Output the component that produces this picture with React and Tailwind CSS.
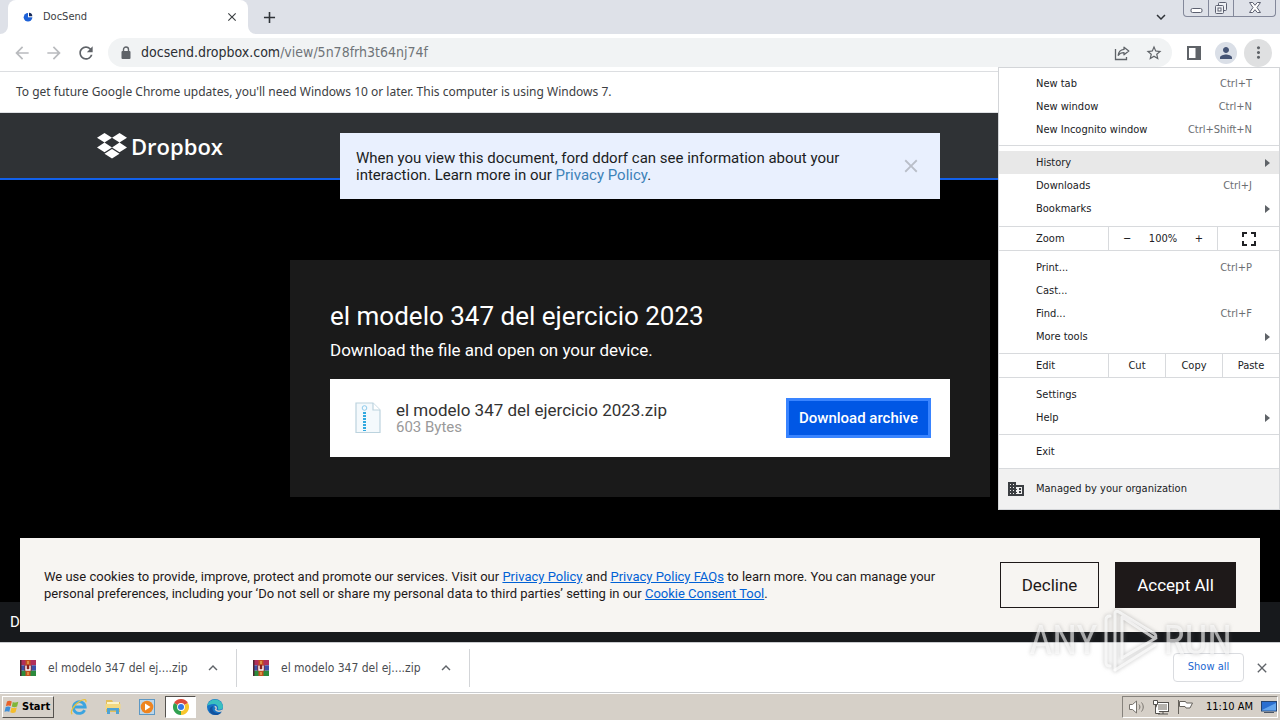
import React from "react";
import {
  MdArrowBack,
  MdArrowForward,
  MdRefresh,
  MdStarBorder,
  MdClose,
  MdAdd,
  MdMoreVert,
  MdPerson,
  MdFullscreen,
  MdKeyboardArrowDown,
  MdKeyboardArrowUp,
} from "react-icons/md";

const ui = "font-['DejaVu_Sans_Condensed','Noto_Sans',sans-serif]";
const web = "font-['Roboto','Liberation_Sans',sans-serif]";

function TabStrip() {
  return (
    <div className="flex h-[34px] items-end bg-[#dee1e8] pl-2">
      <div className="relative flex h-[34px] w-[240px] items-center rounded-t-lg bg-white pl-[14px] pr-[9px]">
        <svg className="absolute -left-2 bottom-0" width="8" height="8" viewBox="0 0 8 8">
          <path d="M8 0v8H0a8 8 0 0 0 8-8z" fill="#fff" />
        </svg>
        <svg className="absolute -right-2 bottom-0" width="8" height="8" viewBox="0 0 8 8">
          <path d="M0 0v8h8a8 8 0 0 1-8-8z" fill="#fff" />
        </svg>
        <svg width="12" height="12" viewBox="0 0 12 12">
          <circle cx="6" cy="6.300" r="4.300" fill="#1d61d8" />
          <path d="M6 6.300V1.500h5v4.800z" fill="#fff" />
          <path d="M7 5.300V1.800a3.500 3.500 0 0 1 3.300 3.500z" fill="#172a5a" />
        </svg>
        <span className="ml-[9px] flex-1 text-[11px] text-[#3c4043]">DocSend</span>
        <button aria-label="Close tab" className="text-[#3c4043]">
          <MdClose size={14} stroke="currentColor" />
        </button>
      </div>
      <button aria-label="New tab" className="ml-3 flex h-[34px] items-center text-[#2f3338]">
        <MdAdd size={19} stroke="currentColor" />
      </button>
      <div className="flex-1" />
      <button aria-label="Search tabs" className="mr-[13px] flex h-[34px] items-center text-[#2f3338]">
        <MdKeyboardArrowDown size={18} stroke="currentColor" />
      </button>
      <div className="mr-1 flex h-[17px] self-start rounded-b border border-t-0 border-[#83889a] text-[#5c6070]">
        <button aria-label="Minimize" className="flex w-[25px] items-center justify-center border-r border-[#83889a]">
          <svg width="13" height="16" viewBox="0 0 13 16" fill="#fff" stroke="currentColor">
            <rect x="1" y="8.500" width="11" height="4" rx="1.500" />
          </svg>
        </button>
        <button aria-label="Restore" className="flex w-[25px] items-center justify-center border-r border-[#83889a]">
          <svg width="14" height="16" viewBox="0 0 14 16" fill="#eef0f4" stroke="currentColor">
            <rect x="4.500" y="2.500" width="8" height="8" rx="1" />
            <rect x="1.500" y="5.500" width="8" height="8" rx="1" />
            <rect x="4" y="8" width="3" height="3" fill="#fff" />
          </svg>
        </button>
        <button aria-label="Close window" className="flex w-[41px] items-center justify-center">
          <svg width="14" height="16" viewBox="0 0 14 16" fill="#fff" stroke="currentColor">
            <path d="M1.500 2.500h3.200L7 5.300l2.300-2.800h3.200L9 7.500l3.500 5H9.300L7 9.700l-2.300 2.800H1.500L5 7.500z" />
          </svg>
        </button>
      </div>
    </div>
  );
}

function Toolbar() {
  return (
    <div className="flex h-[38px] items-center border-b border-[#dcdee1] bg-white pl-3 pr-2 text-[#5f6368]">
      <button aria-label="Back" className="text-[#b9bbbe]">
        <MdArrowBack size={20} />
      </button>
      <button aria-label="Forward" className="ml-3 text-[#b9bbbe]">
        <MdArrowForward size={20} />
      </button>
      <button aria-label="Reload" className="ml-3">
        <MdRefresh size={20} stroke="currentColor" />
      </button>
      <div className="ml-3 flex h-[29px] flex-1 items-center rounded-full bg-[#f1f3f4] pl-[13px] pr-[9px]">
        <svg width="10" height="14" viewBox="0 0 10 14">
          <rect x=".5" y="5" width="9" height="8" rx="1" fill="currentColor" />
          <path d="M2.500 6V3.500a2.500 2.500 0 0 1 5 0V6" fill="none" stroke="currentColor" strokeWidth="1.400" />
        </svg>
        <div className="ml-[10px] flex-1 text-[14px] text-[#6f7378]">
          <span className="text-[#2b2e33]">docsend.dropbox.com</span>/view/5n78frh3t64nj74f
        </div>
        <button aria-label="Share this page">
          <svg width="16" height="16" viewBox="0 0 16 16" fill="none" stroke="currentColor" strokeWidth="1.300">
            <path d="M1.500 4v10.500h11V12" />
            <path d="M10 2.200 14.800 6 10 9.800V7.600c-2.800 0-4.600.9-5.800 2.700.3-3.200 2.300-5.500 5.800-5.900z" strokeLinejoin="round" />
          </svg>
        </button>
        <button aria-label="Bookmark this tab" className="ml-[15px]">
          <MdStarBorder size={18} />
        </button>
      </div>
      <button aria-label="Side panel" className="ml-[14px]">
        <svg width="16" height="16" viewBox="0 0 16 16" fill="currentColor">
          <path d="M1 1h14v14H1zM3 3v10h6.500V3z" fillRule="evenodd" />
        </svg>
      </button>
      <button aria-label="Profile" className="ml-[13px] flex size-[22px] items-center justify-center rounded-full bg-[#dadfe7] text-[#455475]">
        <MdPerson size={18} />
      </button>
      <button aria-label="Chrome menu" className="ml-[7px] flex size-7 items-center justify-center rounded-full bg-[#dfe0e1]">
        <MdMoreVert size={19} />
      </button>
    </div>
  );
}

function Row({ label, keys, sub, active }) {
  return (
    <button
      className={
        "flex h-[23px] w-full items-center pl-[37px] text-left " +
        (active ? "bg-[#e8e8e8] " : "") +
        (sub ? "pr-[9px]" : "pr-[27px]")
      }
    >
      <span className="flex-1">{label}</span>
      {keys && <span className="text-[#6b6e72]">{keys}</span>}
      {sub && (
        <svg width="5" height="8" viewBox="0 0 5 8">
          <path d="M0 0v8l5-4z" fill="#5f6368" />
        </svg>
      )}
    </button>
  );
}

function ChromeMenu() {
  return (
    <div className="absolute right-0 top-[67px] z-30 w-[282px] border border-[#d3d5d8] bg-white text-[11px] leading-4 text-[#202124]">
      <div className="py-1">
        <Row label="New tab" keys="Ctrl+T" />
        <Row label="New window" keys="Ctrl+N" />
        <Row label="New Incognito window" keys="Ctrl+Shift+N" />
      </div>
      <div className="border-t border-[#d8dadd] pb-1.5 pt-[5px]">
        <Row label="History" sub active />
        <Row label="Downloads" keys="Ctrl+J" />
        <Row label="Bookmarks" sub />
      </div>
      <div className="flex h-6 items-stretch border-t border-[#d8dadd]">
        <span className="flex flex-1 items-center pl-[37px]">Zoom</span>
        <div className="flex w-[109px] items-center justify-between border-l border-[#d8dadd] px-[14px]">
          <button aria-label="Zoom out">−</button>
          <span>100%</span>
          <button aria-label="Zoom in">+</button>
        </div>
        <button aria-label="Full screen" className="flex w-[62px] items-center justify-center border-l border-[#d8dadd]">
          <MdFullscreen size={24} />
        </button>
      </div>
      <div className="border-t border-[#d8dadd] py-[5px]">
        <Row label="Print..." keys="Ctrl+P" />
        <Row label="Cast..." />
        <Row label="Find..." keys="Ctrl+F" />
        <Row label="More tools" sub />
      </div>
      <div className="flex h-6 items-stretch border-t border-[#d8dadd]">
        <span className="flex flex-1 items-center pl-[37px]">Edit</span>
        <button className="w-[57px] border-l border-[#d8dadd]">Cut</button>
        <button className="w-[57px] border-l border-[#d8dadd]">Copy</button>
        <button className="w-[57px] border-l border-[#d8dadd]">Paste</button>
      </div>
      <div className="border-t border-[#d8dadd] py-[5px]">
        <Row label="Settings" />
        <Row label="Help" sub />
      </div>
      <div className="border-t border-[#d8dadd] py-[5px]">
        <Row label="Exit" />
      </div>
      <button className="flex h-[41px] w-full items-center border-t border-[#d8dadd] bg-[#f1f1f1] pl-[9px] text-left">
        <svg width="16" height="14" viewBox="0 0 16 14">
          <path d="M0 0h8v3h8v11H0z" fill="#3c3f43" />
          <path
            d="M2 2h1v1H2zM5 2h1v1H5zM2 5h1v1H2zM5 5h1v1H5zM2 8h1v1H2zM5 8h1v1H5zM2 11h1v1H2zM5 11h1v1H5zM8 5h6v7H8v-1h1v-1H8V8h1V7H8z"
            fill="#f1f1f1"
          />
          <path d="M11 6h2v2h-2zM11 9h2v2h-2z" fill="#3c3f43" />
        </svg>
        <span className="ml-3">Managed by your organization</span>
      </button>
    </div>
  );
}

function ZipIcon() {
  return (
    <svg width="28" height="32" viewBox="0 0 28 32" fill="none">
      <path d="M2 1h17l7 7v22.500H2z" fill="#f4f9fc" stroke="#bcd3de" strokeWidth="1.200" />
      <path d="M19 1v7h7" fill="#fff" stroke="#bcd3de" strokeWidth="1.200" />
      <circle cx="10.500" cy="6" r="2.300" stroke="#8ecbec" />
      <path d="M10.500 10v19" stroke="#31a9e0" strokeWidth="3" strokeDasharray="2 1" />
    </svg>
  );
}

function DocumentPage() {
  return (
    <main className={"relative flex flex-1 flex-col bg-black " + web}>
      <header className="flex h-[67px] items-center border-b-2 border-[#1160ea] bg-[#2f3235] pl-[97px] text-white">
        <svg width="30" height="26" viewBox="0 0 30 26" fill="currentColor">
          <path d="M7.500 0 15 4.800 7.500 9.600 0 4.800zM22.500 0 30 4.800l-7.500 4.800L15 4.800zM7.500 9.600l7.500 4.800-7.500 4.800L0 14.400zM22.500 9.600l7.500 4.800-7.500 4.800-7.500-4.800zM15 16l7.500 4.800L15 25.600l-7.500-4.800z" />
        </svg>
        <span className="ml-1 font-['Open_Sans','Noto_Sans',sans-serif] text-[22px] font-semibold leading-7">Dropbox</span>
      </header>

      <div className="absolute left-1/2 top-5 flex h-[66px] w-[600px] -translate-x-1/2 items-center bg-[#e9f0fe] pl-4 pr-[18px] text-[15px] leading-[17px] text-[#1b1d22]">
        <p className="w-[520px] pt-0.5">
          When you view this document, ford ddorf can see information about your interaction. Learn more in our{" "}
          <a href="#privacy" className="text-[#3d82b8]">Privacy Policy</a>.
        </p>
        <button aria-label="Dismiss" className="ml-auto text-[#b9bec8]">
          <MdClose size={22} />
        </button>
      </div>

      <section className="mx-auto mt-20 w-[700px] bg-[#1a1a1a] p-10 text-white">
        <h1 className="text-[26px] leading-8">el modelo 347 del ejercicio 2023</h1>
        <p className="mt-1.5 text-[17px] leading-6">Download the file and open on your device.</p>
        <div className="mt-[17px] flex h-[78px] items-center bg-white pl-6 pr-[19px]">
          <ZipIcon />
          <div className="ml-[14px] flex-1">
            <div className="text-[17px] leading-[18px] text-[#333]">el modelo 347 del ejercicio 2023.zip</div>
            <div className="text-[15px] leading-4 text-[#9a9a9a]">603 Bytes</div>
          </div>
          <button className="h-10 w-[145px] border-[3px] border-[#3984ff] bg-[#0057e5] text-[15px] font-medium text-white">
            Download archive
          </button>
        </div>
      </section>

      <footer className="mt-auto flex h-10 items-center bg-[#17191c] pl-[10px] text-[15px] text-white">D</footer>

      <div className="absolute inset-x-5 bottom-[10px] flex h-[94px] items-center bg-[#f7f5f2] px-6 text-[13px] leading-[17px] text-[#1e1919]">
        <p className="w-[900px]">
          We use cookies to provide, improve, protect and promote our services. Visit our{" "}
          <a href="#privacy" className="text-[#0061d5] underline">Privacy Policy</a> and{" "}
          <a href="#faq" className="text-[#0061d5] underline">Privacy Policy FAQs</a> to learn more. You can manage your
          personal preferences, including your ‘Do not sell or share my personal data to third parties’ setting in our{" "}
          <a href="#consent" className="text-[#0061d5] underline">Cookie Consent Tool</a>.
        </p>
        <div className="ml-auto flex gap-4 text-[17px]">
          <button className="h-[46px] w-[99px] border border-[#1e1919]">Decline</button>
          <button className="h-[46px] w-[121px] bg-[#1e1919] text-white">Accept All</button>
        </div>
      </div>
    </main>
  );
}

function RarIcon() {
  return (
    <svg width="16" height="16" viewBox="0 0 16 16">
      <path d="M0 0h16v5.300H0z" fill="#b02f5a" />
      <path d="M0 5.300h16v5.400H0z" fill="#3c4fa8" />
      <path d="M0 10.700h16V16H0z" fill="#2c8a3c" />
      <path d="M0 0h1.500v16H0z" fill="#4a2430" />
      <path d="M5.500 0h5v16h-5z" fill="#c4501f" />
      <path d="M4.500 5h7v6h-7z" fill="#8a1f1f" />
      <path d="M6 5.500v4.500h4V5.500" fill="none" stroke="#fff" strokeWidth="1.400" />
      <path d="M7.200 1h1.600v3H7.200zM7.200 12h1.600v3H7.200z" fill="#e0a050" />
    </svg>
  );
}

function DownloadItem() {
  return (
    <div className="flex h-[38px] w-[217px] items-center border-r border-[#d3d5d8] pr-[14px]">
      <RarIcon />
      <a href="#file" className="ml-3 flex-1 text-[12px] text-[#4a4d51]">el modelo 347 del ej....zip</a>
      <button aria-label="Download options" className="text-[#5f6368]">
        <MdKeyboardArrowUp size={18} stroke="currentColor" />
      </button>
    </div>
  );
}

function DownloadBar() {
  return (
    <div className="flex h-[51px] items-center border-y border-[#c9cbce] bg-white pl-5 pr-[10px]">
      <DownloadItem />
      <div className="w-4" />
      <DownloadItem />
      <button className="ml-auto h-[29px] w-[71px] rounded border border-[#dadce0] text-[11px] text-[#1a66d0]">Show all</button>
      <button aria-label="Close downloads" className="ml-[10px] text-[#5f6368]">
        <MdClose size={16} stroke="currentColor" />
      </button>
    </div>
  );
}

function Watermark() {
  return (
    <div className="pointer-events-none absolute bottom-[46px] right-[48px] z-20 flex items-center gap-1 font-['Roboto_Condensed','Liberation_Sans',sans-serif] text-[40px] leading-none text-white/60 [filter:drop-shadow(0_0_2px_rgba(110,110,110,0.6))]">
      <span>ANY</span>
      <svg width="58" height="66" viewBox="0 0 58 66" fill="none" stroke="#fff" strokeOpacity=".7" strokeWidth="3" strokeLinejoin="round" strokeLinecap="round">
        <path d="M8 8c-3 0-4 2-4 4v42c0 3 1 4 4 4" />
        <path d="M13 62V5q1-3 4-1l36 22q2 3-1 4L20 9v41l34-20" />
        <path d="M13 62l40-25" />
      </svg>
      <span>RUN</span>
    </div>
  );
}

function Taskbar() {
  return (
    <div className="flex h-[27px] items-center border-t border-white bg-[#d6d0c8] pl-[2px] pr-[2px]">
      <button className="flex h-[22px] w-[52px] items-center gap-[2px] border border-b-[#55524e] border-l-white border-r-[#55524e] border-t-white pl-[1px] text-[11px] font-bold text-black">
        <svg className="shrink-0" width="16" height="14" viewBox="0 0 15 14">
          <path d="M2.500 1.500C4 .5 5.800.6 7.300 1.500L6.200 6C4.800 5.200 3.200 5.200 1.400 6z" fill="#e8622a" />
          <path d="M8.300 2c1.800.9 3.500.8 5.500-.2l-1.200 4.700c-1.800.9-3.600.9-5.300 0z" fill="#7fb63a" />
          <path d="M1.200 7C2.900 6.200 4.500 6.300 6 7l-1.200 4.800C3.300 11 1.700 11 0 11.800z" fill="#3f8fd8" />
          <path d="M7 7.500c1.700.8 3.500.8 5.300-.1L11 12.200c-1.800.9-3.500.9-5.200 0z" fill="#f4bd2c" />
        </svg>
        Start
      </button>
      <button aria-label="Internet Explorer" className="ml-[16px]">
        <svg width="18" height="18" viewBox="0 0 18 18" fill="none">
          <path d="M14.600 12.200a5.900 5.900 0 1 1 .6-3.200H5" stroke="#3ba4e0" strokeWidth="2.800" />
          <path d="M2.200 16.200C-.5 14 4.500 6 9.800 3.200c4-2.300 7.200-2 5.900 1" stroke="#e8c23c" strokeWidth="1.300" />
        </svg>
      </button>
      <button aria-label="File Explorer" className="ml-[16px]">
        <svg width="18" height="18" viewBox="0 0 18 18">
          <path d="M2 2h6l1 2h7v10H2z" fill="#e3bf5a" />
          <path d="M3 4h12v3H3z" fill="#fbf3c8" />
          <path d="M1.500 6h15v5h-15z" fill="#f3d980" />
          <path d="M3 16v-6h12v6h-3v-3.500H6V16z" fill="#4fa3d4" />
        </svg>
      </button>
      <button aria-label="Media Player" className="ml-[16px]">
        <svg width="18" height="18" viewBox="0 0 18 18">
          <rect x="1.500" y="1.500" width="15" height="15" fill="#bcd6ea" stroke="#5d98c4" />
          <circle cx="9" cy="9" r="6.300" fill="#ee8420" />
          <path d="M7 5.500v7L12.500 9z" fill="#fff" />
        </svg>
      </button>
      <button aria-label="Chrome" className="ml-[9px] flex h-[22px] w-[31px] items-center justify-center border border-b-white border-l-[#55524e] border-r-white border-t-[#55524e] bg-white">
        <svg width="16" height="16" viewBox="0 0 16 16">
          <path d="M8 8 1.070 4A8 8 0 0 1 14.930 4z" fill="#dd4b3a" />
          <path d="M8 8 14.930 4A8 8 0 0 1 8 16z" fill="#f8c62c" />
          <path d="M8 8v8A8 8 0 0 1 1.070 4z" fill="#31a150" />
          <circle cx="8" cy="8" r="3.900" fill="#fff" />
          <circle cx="8" cy="8" r="3" fill="#3478e5" />
        </svg>
      </button>
      <button aria-label="Edge" className="ml-[10px]">
        <svg width="18" height="18" viewBox="0 0 18 18">
          <circle cx="9" cy="9" r="8" fill="#1674c6" />
          <path d="M1.200 8A8 8 0 0 1 16.900 8c.4 3-2 4.200-5 3.600 1-3-1-5.600-4.300-5.600C4.500 6 2 7 1.200 8z" fill="#39bfc0" />
          <path d="M7.300 8c-2 2.600-.4 6.600 3.800 7 2 .2 3.800-.5 4.800-1.600-2.600 5-10 4.600-12 .6C2.600 10.800 4.700 8.200 7.300 8z" fill="#12529e" />
          <path d="M8.600 8.500c2 0 1.900 2.200 1 3.300 1.600 1.600 4.800 1.500 7 .3" stroke="#d6d0c8" strokeWidth="1.400" fill="none" />
        </svg>
      </button>
      <div className="ml-auto flex h-[22px] items-center border border-b-white border-l-[#86827c] border-r-white border-t-[#86827c] pl-[5px] text-[11px] text-black">
        <svg width="18" height="16" viewBox="0 0 18 16" fill="#fff" stroke="#77736d">
          <path d="M1.500 5.500h3l4-3.500v12l-4-3.500h-3z" />
          <path d="M11 5.500c1.200 1.500 1.200 3.500 0 5M13.500 3.500c2.300 2.700 2.300 6.300 0 9" fill="none" />
        </svg>
        <svg className="ml-[6px]" width="18" height="16" viewBox="0 0 18 16" fill="#fff" stroke="#55524e">
          <rect x="4.500" y="3.500" width="12" height="9" />
          <rect x="6" y="5" width="9" height="6" fill="#b5b2ad" stroke="none" />
          <path d="M6 15h10M11 13v2" fill="none" />
          <path d="M1.500 1.500h4v4h-4zM3.500 6v8.500H8" />
        </svg>
        <svg className="ml-[6px]" width="18" height="16" viewBox="0 0 18 16" fill="#fff" stroke="#66625c">
          <path d="M2.500 1v14" />
          <path d="M3.500 2.500h6l1 1.500h6l-2.500 5h-4L9 7.500H3.500z" />
        </svg>
        <time className="ml-3">11:10 AM</time>
        <svg className="ml-2" width="16" height="14" viewBox="0 0 16 14">
          <rect x=".5" y="1.500" width="15" height="9.500" fill="#2b6fd0" stroke="#27456f" />
          <path d="M1 10 15 3v7.500H1z" fill="#64a5ec" />
          <path d="M3 12.500h10" stroke="#4a5668" />
        </svg>
      </div>
    </div>
  );
}

export default function App() {
  return (
    <div className={"relative flex min-h-screen flex-col overflow-hidden " + ui}>
      <TabStrip />
      <Toolbar />
      <div className="flex h-[41px] items-center border-b border-[#dfe1e4] bg-white px-4 font-['Noto_Sans',sans-serif] text-[12px] text-[#3c4043]">
        To get future Google Chrome updates, you'll need Windows 10 or later. This computer is using Windows 7.
      </div>
      <DocumentPage />
      <DownloadBar />
      <Taskbar />
      <ChromeMenu />
      <Watermark />
    </div>
  );
}
